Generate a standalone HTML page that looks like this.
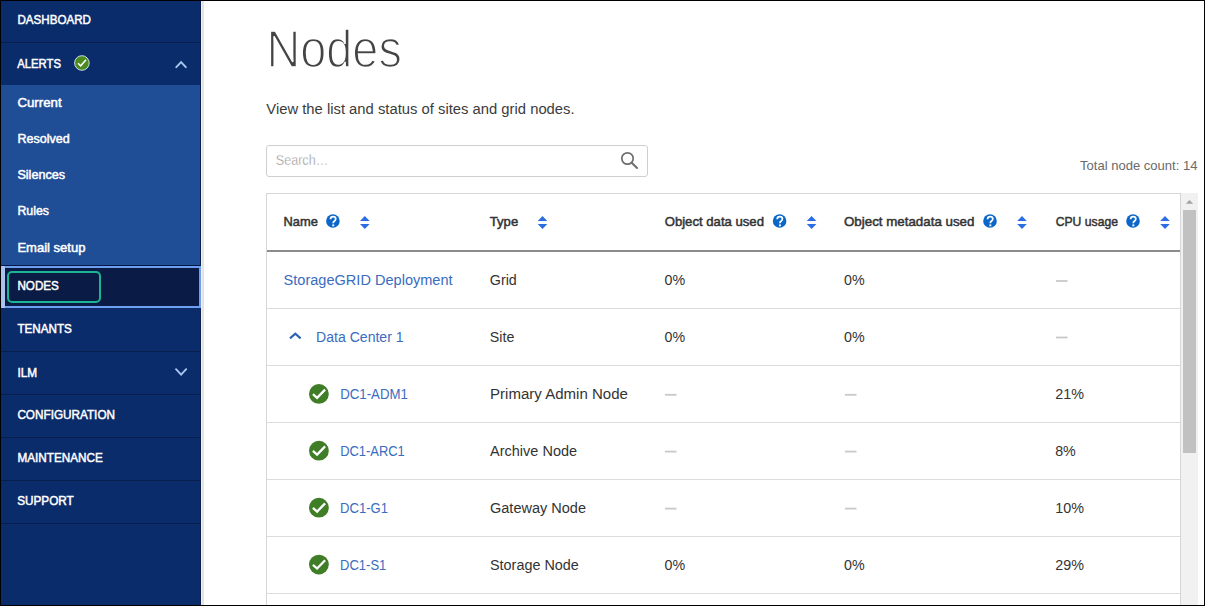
<!DOCTYPE html>
<html><head><meta charset="utf-8"><title>Nodes</title>
<style>
html,body{margin:0;padding:0;background:#fff;}
body{width:1205px;height:606px;position:relative;overflow:hidden;font-family:"Liberation Sans",sans-serif;}
.a{position:absolute;box-sizing:border-box;}
svg{position:absolute;left:0;top:0;}
svg text{font-family:"Liberation Sans",sans-serif;}
</style></head><body>
<!-- sidebar -->
<div class="a" style="left:0;top:0;width:201px;height:606px;background:#0b2c6b"></div>
<div class="a" style="left:200px;top:0;width:1px;height:606px;background:#0a2254"></div>
<div class="a" style="left:201px;top:0;width:1px;height:606px;background:#f3f1ee"></div>
<div class="a" style="left:202px;top:0;width:2px;height:606px;background:#e5e3e0"></div>
<div class="a" style="left:0;top:42px;width:201px;height:1px;background:#081f4e"></div>
<div class="a" style="left:0;top:84px;width:200px;height:1px;background:#0a2a68"></div>
<div class="a" style="left:0;top:85px;width:200px;height:180px;background:#1f4d96"></div>
<div class="a" style="left:0;top:265px;width:200px;height:1px;background:#061a48"></div>
<div class="a" style="left:1px;top:266px;width:200px;height:42px;background:#0a1c45;border:2px solid #6d9ef0;border-left:0"></div>
<div class="a" style="left:1px;top:266px;width:4px;height:42px;background:#abc2ee"></div>
<div class="a" style="left:7px;top:271px;width:94px;height:32px;border:2px solid #1cb592;border-radius:5px"></div>
<div class="a" style="left:0;top:351px;width:201px;height:1px;background:#081f4e"></div>
<div class="a" style="left:0;top:394px;width:201px;height:1px;background:#081f4e"></div>
<div class="a" style="left:0;top:437px;width:201px;height:1px;background:#081f4e"></div>
<div class="a" style="left:0;top:480px;width:201px;height:1px;background:#081f4e"></div>
<div class="a" style="left:0;top:523px;width:201px;height:1px;background:#081f4e"></div>
<!-- search -->
<div class="a" style="left:266px;top:145px;width:382px;height:32px;border:1px solid #cfcfcf;border-radius:3px"></div>
<!-- table -->
<div class="a" style="left:266px;top:193px;width:915px;height:420px;border:1px solid #d6d6d6"></div>
<div class="a" style="left:267px;top:250px;width:913px;height:2px;background:#8c8c8c"></div>
<div class="a" style="left:267px;top:308px;width:913px;height:1px;background:#dcdcdc"></div>
<div class="a" style="left:267px;top:365px;width:913px;height:1px;background:#dcdcdc"></div>
<div class="a" style="left:267px;top:422px;width:913px;height:1px;background:#dcdcdc"></div>
<div class="a" style="left:267px;top:479px;width:913px;height:1px;background:#dcdcdc"></div>
<div class="a" style="left:267px;top:536px;width:913px;height:1px;background:#dcdcdc"></div>
<div class="a" style="left:267px;top:593px;width:913px;height:1px;background:#dcdcdc"></div>
<!-- scrollbar -->
<div class="a" style="left:1181px;top:193px;width:17px;height:413px;background:#f1f1f1"></div>
<div class="a" style="left:1183px;top:210px;width:13px;height:243px;background:#c1c1c1"></div>
<svg width="1205" height="606" viewBox="0 0 1205 606">
<text x="17.40" y="24.30" font-size="13.2" font-weight="normal" fill="#ffffff" textLength="73.59" lengthAdjust="spacingAndGlyphs" stroke="#ffffff" stroke-width="0.5">DASHBOARD</text>
<text x="17.20" y="67.90" font-size="13.2" font-weight="normal" fill="#ffffff" textLength="43.80" lengthAdjust="spacingAndGlyphs" stroke="#ffffff" stroke-width="0.5">ALERTS</text>
<text x="17.40" y="107.10" font-size="13.2" font-weight="normal" fill="#ffffff" textLength="44.19" lengthAdjust="spacingAndGlyphs" stroke="#ffffff" stroke-width="0.5">Current</text>
<text x="17.40" y="143.00" font-size="13.2" font-weight="normal" fill="#ffffff" textLength="52.30" lengthAdjust="spacingAndGlyphs" stroke="#ffffff" stroke-width="0.5">Resolved</text>
<text x="17.40" y="179.30" font-size="13.2" font-weight="normal" fill="#ffffff" textLength="47.70" lengthAdjust="spacingAndGlyphs" stroke="#ffffff" stroke-width="0.5">Silences</text>
<text x="17.40" y="215.00" font-size="13.2" font-weight="normal" fill="#ffffff" textLength="31.50" lengthAdjust="spacingAndGlyphs" stroke="#ffffff" stroke-width="0.5">Rules</text>
<text x="17.40" y="251.50" font-size="13.2" font-weight="normal" fill="#ffffff" textLength="68.00" lengthAdjust="spacingAndGlyphs" stroke="#ffffff" stroke-width="0.5">Email setup</text>
<text x="17.40" y="290.00" font-size="13.2" font-weight="normal" fill="#ffffff" textLength="41.50" lengthAdjust="spacingAndGlyphs" stroke="#ffffff" stroke-width="0.5">NODES</text>
<text x="17.40" y="333.10" font-size="13.2" font-weight="normal" fill="#ffffff" textLength="54.40" lengthAdjust="spacingAndGlyphs" stroke="#ffffff" stroke-width="0.5">TENANTS</text>
<text x="17.40" y="377.00" font-size="13.2" font-weight="normal" fill="#ffffff" textLength="19.70" lengthAdjust="spacingAndGlyphs" stroke="#ffffff" stroke-width="0.5">ILM</text>
<text x="17.40" y="419.00" font-size="13.2" font-weight="normal" fill="#ffffff" textLength="97.61" lengthAdjust="spacingAndGlyphs" stroke="#ffffff" stroke-width="0.5">CONFIGURATION</text>
<text x="17.40" y="462.10" font-size="13.2" font-weight="normal" fill="#ffffff" textLength="85.40" lengthAdjust="spacingAndGlyphs" stroke="#ffffff" stroke-width="0.5">MAINTENANCE</text>
<text x="17.20" y="505.40" font-size="13.2" font-weight="normal" fill="#ffffff" textLength="56.60" lengthAdjust="spacingAndGlyphs" stroke="#ffffff" stroke-width="0.5">SUPPORT</text>
<text x="266.50" y="67.10" font-size="51" font-weight="normal" fill="#444444" textLength="135.28" lengthAdjust="spacingAndGlyphs" stroke="#ffffff" stroke-width="1.6">Nodes</text>
<text x="266.30" y="113.90" font-size="15.4" font-weight="normal" fill="#3b3b3b" textLength="308.30" lengthAdjust="spacingAndGlyphs">View the list and status of sites and grid nodes.</text>
<text x="275.80" y="164.90" font-size="13.8" font-weight="normal" fill="#8f8f8f" textLength="52.41" lengthAdjust="spacingAndGlyphs" stroke="#ffffff" stroke-width="0.35">Search…</text>
<text x="1080.00" y="169.60" font-size="13.2" font-weight="normal" fill="#6a6a6a" textLength="117.40" lengthAdjust="spacingAndGlyphs">Total node count: 14</text>
<text x="283.50" y="225.90" font-size="13.2" font-weight="normal" fill="#333333" textLength="34.39" lengthAdjust="spacingAndGlyphs" stroke="#333333" stroke-width="0.5">Name</text>
<text x="489.80" y="225.90" font-size="13.2" font-weight="normal" fill="#333333" textLength="28.40" lengthAdjust="spacingAndGlyphs" stroke="#333333" stroke-width="0.5">Type</text>
<text x="664.70" y="225.90" font-size="13.2" font-weight="normal" fill="#333333" textLength="99.29" lengthAdjust="spacingAndGlyphs" stroke="#333333" stroke-width="0.5">Object data used</text>
<text x="844.00" y="225.90" font-size="13.2" font-weight="normal" fill="#333333" textLength="130.40" lengthAdjust="spacingAndGlyphs" stroke="#333333" stroke-width="0.5">Object metadata used</text>
<text x="1055.70" y="225.90" font-size="13.2" font-weight="normal" fill="#333333" textLength="62.30" lengthAdjust="spacingAndGlyphs" stroke="#333333" stroke-width="0.5">CPU usage</text>
<text x="283.60" y="285.20" font-size="15.4" font-weight="normal" fill="#3a6cbf" textLength="169.00" lengthAdjust="spacingAndGlyphs">StorageGRID Deployment</text>
<text x="489.80" y="285.20" font-size="15.4" font-weight="normal" fill="#333333" textLength="27.00" lengthAdjust="spacingAndGlyphs">Grid</text>
<text x="664.60" y="285.20" font-size="15.4" font-weight="normal" fill="#333333" textLength="20.60" lengthAdjust="spacingAndGlyphs">0%</text>
<text x="844.10" y="285.20" font-size="15.4" font-weight="normal" fill="#333333" textLength="20.60" lengthAdjust="spacingAndGlyphs">0%</text>
<text x="316.10" y="341.70" font-size="15.4" font-weight="normal" fill="#3a6cbf" textLength="87.49" lengthAdjust="spacingAndGlyphs">Data Center 1</text>
<text x="489.80" y="341.70" font-size="15.4" font-weight="normal" fill="#333333" textLength="24.60" lengthAdjust="spacingAndGlyphs">Site</text>
<text x="664.60" y="341.70" font-size="15.4" font-weight="normal" fill="#333333" textLength="20.60" lengthAdjust="spacingAndGlyphs">0%</text>
<text x="844.10" y="341.70" font-size="15.4" font-weight="normal" fill="#333333" textLength="20.60" lengthAdjust="spacingAndGlyphs">0%</text>
<text x="340.20" y="399.00" font-size="15.4" font-weight="normal" fill="#3a6cbf" textLength="67.70" lengthAdjust="spacingAndGlyphs">DC1-ADM1</text>
<text x="490.00" y="399.00" font-size="15.4" font-weight="normal" fill="#333333" textLength="137.90" lengthAdjust="spacingAndGlyphs">Primary Admin Node</text>
<text x="1055.20" y="399.00" font-size="15.4" font-weight="normal" fill="#333333" textLength="28.71" lengthAdjust="spacingAndGlyphs">21%</text>
<text x="340.20" y="455.80" font-size="15.4" font-weight="normal" fill="#3a6cbf" textLength="64.60" lengthAdjust="spacingAndGlyphs">DC1-ARC1</text>
<text x="490.00" y="455.80" font-size="15.4" font-weight="normal" fill="#333333" textLength="87.10" lengthAdjust="spacingAndGlyphs">Archive Node</text>
<text x="1055.20" y="455.80" font-size="15.4" font-weight="normal" fill="#333333" textLength="20.60" lengthAdjust="spacingAndGlyphs">8%</text>
<text x="340.10" y="512.80" font-size="15.4" font-weight="normal" fill="#3a6cbf" textLength="47.89" lengthAdjust="spacingAndGlyphs">DC1-G1</text>
<text x="490.00" y="512.80" font-size="15.4" font-weight="normal" fill="#333333" textLength="96.00" lengthAdjust="spacingAndGlyphs">Gateway Node</text>
<text x="1055.20" y="512.80" font-size="15.4" font-weight="normal" fill="#333333" textLength="28.71" lengthAdjust="spacingAndGlyphs">10%</text>
<text x="340.10" y="569.70" font-size="15.4" font-weight="normal" fill="#3a6cbf" textLength="46.20" lengthAdjust="spacingAndGlyphs">DC1-S1</text>
<text x="490.00" y="569.70" font-size="15.4" font-weight="normal" fill="#333333" textLength="88.80" lengthAdjust="spacingAndGlyphs">Storage Node</text>
<text x="664.60" y="569.70" font-size="15.4" font-weight="normal" fill="#333333" textLength="20.60" lengthAdjust="spacingAndGlyphs">0%</text>
<text x="844.10" y="569.70" font-size="15.4" font-weight="normal" fill="#333333" textLength="20.60" lengthAdjust="spacingAndGlyphs">0%</text>
<text x="1055.20" y="569.70" font-size="15.4" font-weight="normal" fill="#333333" textLength="28.71" lengthAdjust="spacingAndGlyphs">29%</text>
<rect x="1056" y="280.1" width="11.5" height="1.8" fill="#c9c9c9"/>
<rect x="1056" y="336.6" width="11.5" height="1.8" fill="#c9c9c9"/>
<rect x="665" y="393.9" width="11.5" height="1.8" fill="#c9c9c9"/>
<rect x="845" y="393.9" width="11.5" height="1.8" fill="#c9c9c9"/>
<rect x="665" y="450.7" width="11.5" height="1.8" fill="#c9c9c9"/>
<rect x="845" y="450.7" width="11.5" height="1.8" fill="#c9c9c9"/>
<rect x="665" y="507.7" width="11.5" height="1.8" fill="#c9c9c9"/>
<rect x="845" y="507.7" width="11.5" height="1.8" fill="#c9c9c9"/>
<circle cx="332.9" cy="221.0" r="6.8" fill="#0a66c8"/><g transform="translate(0.00,0)"><path d="M330.5,219.3 C330.5,217.7 331.6,216.7 333.1,216.7 C334.7,216.7 335.7,217.7 335.7,219 C335.7,220.3 334.9,220.8 334.2,221.3 C333.6,221.7 333.2,222.1 333.2,223.2" fill="none" stroke="#fff" stroke-width="1.75"/><rect x="332.3" y="224.4" width="1.9" height="1.9" fill="#fff"/></g>
<circle cx="779.6" cy="221.0" r="6.8" fill="#0a66c8"/><g transform="translate(446.70,0)"><path d="M330.5,219.3 C330.5,217.7 331.6,216.7 333.1,216.7 C334.7,216.7 335.7,217.7 335.7,219 C335.7,220.3 334.9,220.8 334.2,221.3 C333.6,221.7 333.2,222.1 333.2,223.2" fill="none" stroke="#fff" stroke-width="1.75"/><rect x="332.3" y="224.4" width="1.9" height="1.9" fill="#fff"/></g>
<circle cx="990.0" cy="221.0" r="6.8" fill="#0a66c8"/><g transform="translate(657.10,0)"><path d="M330.5,219.3 C330.5,217.7 331.6,216.7 333.1,216.7 C334.7,216.7 335.7,217.7 335.7,219 C335.7,220.3 334.9,220.8 334.2,221.3 C333.6,221.7 333.2,222.1 333.2,223.2" fill="none" stroke="#fff" stroke-width="1.75"/><rect x="332.3" y="224.4" width="1.9" height="1.9" fill="#fff"/></g>
<circle cx="1133.0" cy="221.0" r="6.8" fill="#0a66c8"/><g transform="translate(800.10,0)"><path d="M330.5,219.3 C330.5,217.7 331.6,216.7 333.1,216.7 C334.7,216.7 335.7,217.7 335.7,219 C335.7,220.3 334.9,220.8 334.2,221.3 C333.6,221.7 333.2,222.1 333.2,223.2" fill="none" stroke="#fff" stroke-width="1.75"/><rect x="332.3" y="224.4" width="1.9" height="1.9" fill="#fff"/></g>
<path d="M360.0,221 L364.8,216 L369.6,221 Z M360.0,224 L364.8,229 L369.6,224 Z" fill="#2b6de3"/>
<path d="M537.7,221 L542.5,216 L547.3,221 Z M537.7,224 L542.5,229 L547.3,224 Z" fill="#2b6de3"/>
<path d="M806.8000000000001,221 L811.6,216 L816.4,221 Z M806.8000000000001,224 L811.6,229 L816.4,224 Z" fill="#2b6de3"/>
<path d="M1017.2,221 L1022.0,216 L1026.8,221 Z M1017.2,224 L1022.0,229 L1026.8,224 Z" fill="#2b6de3"/>
<path d="M1160.2,221 L1165.0,216 L1169.8,221 Z M1160.2,224 L1165.0,229 L1169.8,224 Z" fill="#2b6de3"/>
<circle cx="318.9" cy="393.9" r="9.9" fill="#3f7d27"/><path d="M312.9,394.09999999999997 L317.09999999999997,397.79999999999995 L325.09999999999997,389.59999999999997" fill="none" stroke="#fff" stroke-width="2.3"/>
<circle cx="318.9" cy="450.7" r="9.9" fill="#3f7d27"/><path d="M312.9,450.9 L317.09999999999997,454.59999999999997 L325.09999999999997,446.4" fill="none" stroke="#fff" stroke-width="2.3"/>
<circle cx="318.9" cy="507.69999999999993" r="9.9" fill="#3f7d27"/><path d="M312.9,507.8999999999999 L317.09999999999997,511.5999999999999 L325.09999999999997,503.3999999999999" fill="none" stroke="#fff" stroke-width="2.3"/>
<circle cx="318.9" cy="564.6" r="9.9" fill="#3f7d27"/><path d="M312.9,564.8000000000001 L317.09999999999997,568.5 L325.09999999999997,560.3000000000001" fill="none" stroke="#fff" stroke-width="2.3"/>
<path d="M290.0,338.4 L295.3,333.6 L300.6,338.4" fill="none" stroke="#2f62b5" stroke-width="2.1"/>
<circle cx="627.5" cy="158.5" r="5.7" fill="none" stroke="#6e6e6e" stroke-width="1.7"/><path d="M631.7,162.7 L637.0,168.0" stroke="#6e6e6e" stroke-width="2.0" stroke-linecap="round"/>
<circle cx="81.9" cy="63" r="7.3" fill="#4c8b1f" stroke="#dfe9f5" stroke-width="0.9"/><path d="M78.0,63.2 L80.7,65.8 L86.0,59.7" fill="none" stroke="#fff" stroke-width="1.5"/>
<path d="M176.3,67.2 L181.1,62.2 L185.8,67.2" fill="none" stroke="#a9c6f3" stroke-width="1.9" stroke-linecap="round"/>
<path d="M176.0,369.2 L181.1,374.6 L186.2,369.2" fill="none" stroke="#a9c6f3" stroke-width="1.9" stroke-linecap="round"/>
<path d="M1185.8,203.8 L1189.5,199.9 L1193.2,203.8 Z" fill="#a3a3a3"/>
</svg>
<!-- frame -->
<div class="a" style="left:0;top:0;width:1205px;height:606px;border:1px solid #000;pointer-events:none"></div>
</body></html>
